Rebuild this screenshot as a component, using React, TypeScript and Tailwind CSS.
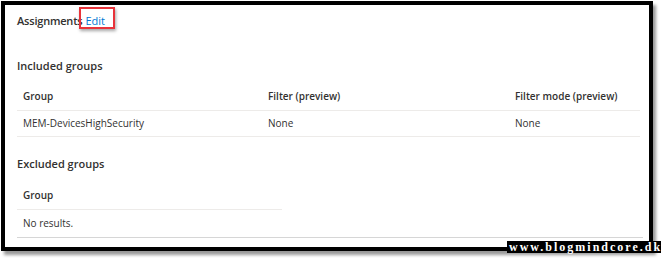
import React from 'react'

const font = { fontFamily: '"Segoe UI", "Open Sans", "Noto Sans", sans-serif' }

function HeaderCell({ children }: { children: React.ReactNode }) {
  return <div className="px-[6px] font-semibold">{children}</div>
}

export default function App() {
  return (
    <div className="relative w-[661px] h-[258px] bg-white text-[10px] text-[#323130]" style={font}>
      {/* framed screenshot */}
      <div className="ml-[1px] mt-[1px] w-[652px] h-[250px] border-4 border-black bg-white shadow-[3px_4px_3px_rgba(0,0,0,0.4)] px-[12px] pt-[6px]">
        {/* Assignments header */}
        <div className="flex items-center h-5 leading-5">
          <span className="text-[11px] font-semibold tracking-[-0.2px]">Assignments</span>
          <span className="relative ml-[3px] text-[11px] text-[#0078d4]">
            Edit
            <span className="absolute left-[-6px] top-[-4px] w-[36px] h-[22px] border-2 border-[#e8333a] shadow-[1px_2px_3px_rgba(0,0,0,0.35)]" />
          </span>
        </div>

        {/* Included groups */}
        <div className="mt-[25px] h-5 leading-5 text-[11px] font-semibold">Included groups</div>
        <div className="mt-[7px] w-[623px]">
          <div className="grid grid-cols-[245px_247px_131px] items-center h-[28px] border-b border-[#edebe9]">
            <HeaderCell>Group</HeaderCell>
            <HeaderCell>Filter (preview)</HeaderCell>
            <HeaderCell>Filter mode (preview)</HeaderCell>
          </div>
          <div className="grid grid-cols-[245px_247px_131px] items-center h-[26px] border-b border-[#edebe9]">
            <div className="px-[6px]">MEM-DevicesHighSecurity</div>
            <div className="px-[6px]">None</div>
            <div className="px-[6px]">None</div>
          </div>
        </div>

        {/* Excluded groups */}
        <div className="mt-[17px] h-5 leading-5 text-[11px] font-semibold">Excluded groups</div>
        <div className="mt-[8px] w-[265px] flex items-center h-[28px] border-b border-[#edebe9]">
          <HeaderCell>Group</HeaderCell>
        </div>
        <div className="w-[626px] flex items-center h-[28px] border-b border-[#d6d6d6]">
          <div className="px-[6px]">No results.</div>
        </div>
      </div>

      {/* watermark */}
      <span
        className="absolute left-[507px] top-[240px] h-[12px] px-[2px] bg-black text-white text-[12px] leading-[12px] font-bold tracking-[2px]"
        style={{ fontFamily: '"Liberation Serif", serif' }}
      >
        www.blogmindcore.dk
      </span>
    </div>
  )
}
